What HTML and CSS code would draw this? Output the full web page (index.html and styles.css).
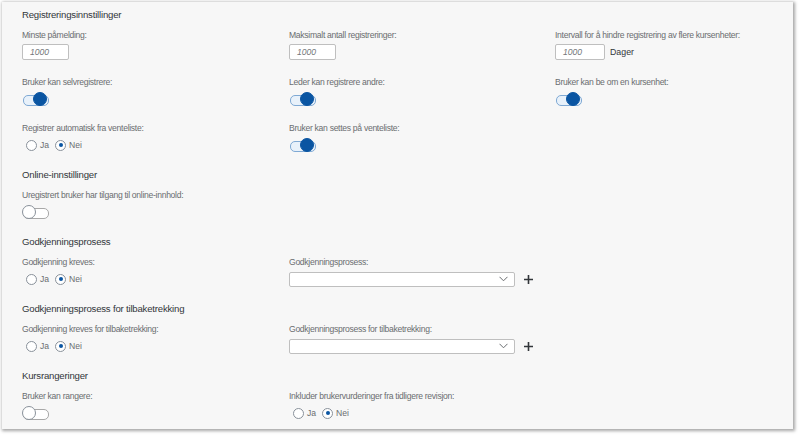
FILE: index.html
```html
<!DOCTYPE html>
<html lang="no">
<head>
<meta charset="utf-8">
<link rel="stylesheet" href="styles.css">
</head>
<body>
<div class="panel">
  <section class="section">
    <h2 class="heading">Registreringsinnstillinger</h2>
    <div class="row">
      <div class="field">
        <div class="label">Minste påmelding:</div>
        <div class="control"><div class="input">1000</div></div>
      </div>
      <div class="field">
        <div class="label">Maksimalt antall registreringer:</div>
        <div class="control"><div class="input">1000</div></div>
      </div>
      <div class="field">
        <div class="label">Intervall for å hindre registrering av flere kursenheter:</div>
        <div class="control"><div class="input input-wide">1000</div><span class="unit">Dager</span></div>
      </div>
    </div>
    <div class="row">
      <div class="field">
        <div class="label">Bruker kan selvregistrere:</div>
        <div class="control"><span class="switch on"><span class="knob"></span></span></div>
      </div>
      <div class="field">
        <div class="label">Leder kan registrere andre:</div>
        <div class="control"><span class="switch on"><span class="knob"></span></span></div>
      </div>
      <div class="field">
        <div class="label">Bruker kan be om en kursenhet:</div>
        <div class="control"><span class="switch on"><span class="knob"></span></span></div>
      </div>
    </div>
    <div class="row">
      <div class="field">
        <div class="label">Registrer automatisk fra venteliste:</div>
        <div class="control radios">
          <span class="radio"></span><span class="rlabel">Ja</span>
          <span class="radio checked"></span><span class="rlabel">Nei</span>
        </div>
      </div>
      <div class="field">
        <div class="label">Bruker kan settes på venteliste:</div>
        <div class="control"><span class="switch on"><span class="knob"></span></span></div>
      </div>
    </div>
  </section>

  <section class="section">
    <h2 class="heading">Online-innstillinger</h2>
    <div class="row">
      <div class="field field-wide">
        <div class="label">Uregistrert bruker har tilgang til online-innhold:</div>
        <div class="control"><span class="switch"><span class="knob"></span></span></div>
      </div>
    </div>
  </section>

  <section class="section">
    <h2 class="heading">Godkjenningsprosess</h2>
    <div class="row">
      <div class="field">
        <div class="label">Godkjenning kreves:</div>
        <div class="control radios">
          <span class="radio"></span><span class="rlabel">Ja</span>
          <span class="radio checked"></span><span class="rlabel">Nei</span>
        </div>
      </div>
      <div class="field">
        <div class="label">Godkjenningsprosess:</div>
        <div class="control">
          <div class="select"><svg class="chev" width="9" height="6" viewBox="0 0 9 6"><path d="M0.5 0.8 L4.5 4.8 L8.5 0.8" fill="none" stroke="#6a6d70" stroke-width="1"/></svg></div>
          <svg class="plus" width="9" height="9" viewBox="0 0 9 9"><path d="M4.5 0 V9 M0 4.5 H9" stroke="#32363a" stroke-width="1.6"/></svg>
        </div>
      </div>
    </div>
  </section>

  <section class="section">
    <h2 class="heading">Godkjenningsprosess for tilbaketrekking</h2>
    <div class="row">
      <div class="field">
        <div class="label">Godkjenning kreves for tilbaketrekking:</div>
        <div class="control radios">
          <span class="radio"></span><span class="rlabel">Ja</span>
          <span class="radio checked"></span><span class="rlabel">Nei</span>
        </div>
      </div>
      <div class="field">
        <div class="label">Godkjenningsprosess for tilbaketrekking:</div>
        <div class="control">
          <div class="select"><svg class="chev" width="9" height="6" viewBox="0 0 9 6"><path d="M0.5 0.8 L4.5 4.8 L8.5 0.8" fill="none" stroke="#6a6d70" stroke-width="1"/></svg></div>
          <svg class="plus" width="9" height="9" viewBox="0 0 9 9"><path d="M4.5 0 V9 M0 4.5 H9" stroke="#32363a" stroke-width="1.6"/></svg>
        </div>
      </div>
    </div>
  </section>

  <section class="section">
    <h2 class="heading">Kursrangeringer</h2>
    <div class="row">
      <div class="field">
        <div class="label">Bruker kan rangere:</div>
        <div class="control"><span class="switch"><span class="knob"></span></span></div>
      </div>
      <div class="field">
        <div class="label">Inkluder brukervurderinger fra tidligere revisjon:</div>
        <div class="control radios">
          <span class="radio"></span><span class="rlabel">Ja</span>
          <span class="radio checked"></span><span class="rlabel">Nei</span>
        </div>
      </div>
    </div>
  </section>
</div>
</body>
</html>
```

FILE: styles.css
```css
* { box-sizing: border-box; }
html, body { margin: 0; padding: 0; background: #ffffff; }
body {
  font-family: "Liberation Sans", Arial, sans-serif;
  color: #32363a;
  width: 800px;
  height: 436px;
  overflow: hidden;
}
.panel {
  margin: 2px 0 0 2px;
  width: 791px;
  height: 427px;
  background: #f7f7f7;
  box-shadow: 1px 1px 3px 1px rgba(0, 0, 0, 0.35);
  padding: 6px 0 0 20px;
  display: flex;
  flex-direction: column;
  gap: 14px;
}
.section {
  display: flex;
  flex-direction: column;
  gap: 14.5px;
}
.heading {
  margin: 0 0 -7.5px 0;
  height: 14px;
  line-height: 14px;
  font-size: 9.6px;
  letter-spacing: -0.2px;
  font-weight: normal;
  color: #32363a;
}
.row {
  display: grid;
  grid-template-columns: 267px 266px 1fr;
}
.field { display: flex; flex-direction: column; gap: 2px; }
.field-wide { grid-column: span 2; }
.label {
  height: 12px;
  line-height: 12px;
  font-size: 8.6px;
  letter-spacing: -0.3px;
  color: #6a6d70;
  white-space: nowrap;
}
.control {
  height: 18px;
  display: flex;
  align-items: center;
}
.input {
  width: 47px;
  height: 16px;
  background: #ffffff;
  border: 1px solid #bfbfbf;
  border-radius: 2px;
  font-size: 8.6px;
  font-style: italic;
  color: #74777a;
  line-height: 14px;
  padding-left: 7px;
}
.input-wide { width: 50px; }
.unit {
  margin-left: 5px;
  font-size: 8.8px;
  color: #32363a;
}
.switch {
  position: relative;
  width: 26px;
  height: 14px;
  display: inline-block;
}
.switch::before {
  content: "";
  position: absolute;
  left: 1px;
  top: 3px;
  width: 24px;
  height: 9px;
  border-radius: 5px;
  border: 1px solid #a8a8a8;
  background: #ffffff;
}
.switch .knob {
  position: absolute;
  left: 0;
  top: 0;
  width: 14px;
  height: 14px;
  border-radius: 50%;
  background: #ffffff;
  border: 1px solid #89919a;
}
.switch.on::before {
  background: #e8f1fa;
  border-color: #7fa9d4;
}
.switch.on .knob {
  left: 11px;
  background: #0a55a2;
  border-color: #0a55a2;
}
.radios { padding-left: 4px; }
.radio {
  width: 11px;
  height: 11px;
  border-radius: 50%;
  border: 1px solid #89919a;
  background: #ffffff;
  display: flex;
  align-items: center;
  justify-content: center;
}
.radio.checked::after {
  content: "";
  width: 4px;
  height: 4px;
  border-radius: 50%;
  background: #0a55a2;
}
.rlabel {
  font-size: 8.6px;
  color: #6a6d70;
  margin-left: 3px;
  margin-right: 6px;
}
.select {
  width: 226px;
  height: 15px;
  background: #ffffff;
  border: 1px solid #bfbfbf;
  border-radius: 2px;
  display: flex;
  align-items: center;
  justify-content: flex-end;
  padding-right: 6px;
}
.plus { margin-left: 9px; }
```
